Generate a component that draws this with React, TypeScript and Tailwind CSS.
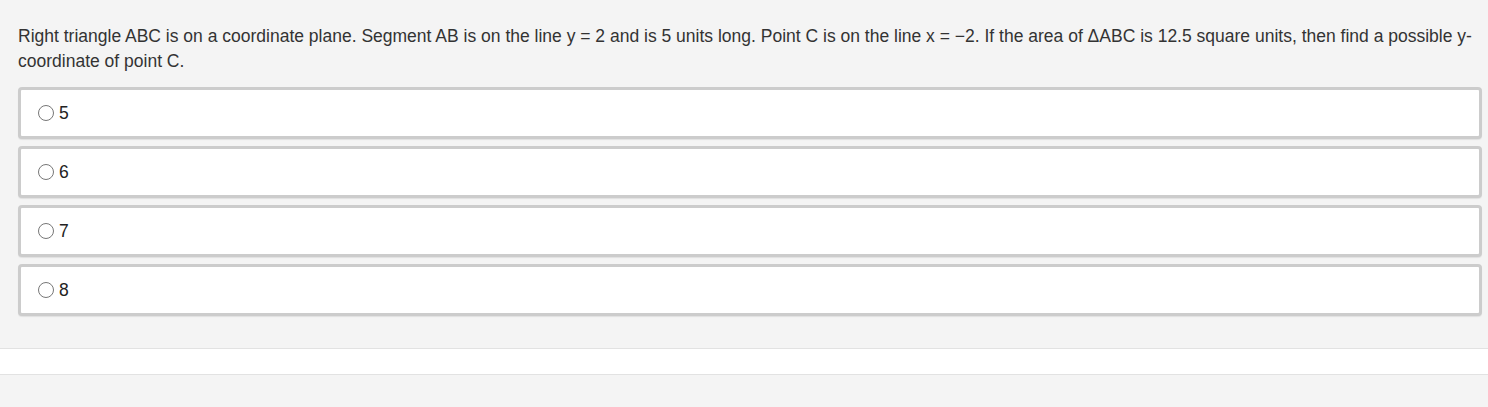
const options = ["5", "6", "7", "8"];

export default function App() {
  return (
    <div className="min-h-[407px] bg-[#f4f4f4] font-['Liberation_Sans',Arial,sans-serif] text-[#333333]">
      <div className="px-[18px] pr-[6px] pt-[24px]">
        <p className="text-[17.5px] leading-[25px] pr-[4px]">
          Right triangle ABC is on a coordinate plane. Segment AB is on the line y = 2 and is 5 units long. Point C is on the line x = −2. If the area of ΔABC is 12.5 square units, then find a possible y-coordinate of point C.
        </p>
        <div className="mt-[13px] flex flex-col gap-[7px]">
          {options.map((opt) => (
            <label
              key={opt}
              className="flex h-[52px] items-center rounded-[4px] border-[3px] border-[#cccccc] bg-white pl-[17px] shadow-[0_1px_1px_rgba(0,0,0,0.08)]"
            >
              <span className="h-[16px] w-[16px] rounded-full border border-[#777777] bg-white" />
              <span className="ml-[5px] pt-[2px] text-[17.5px] leading-none text-[#222222]">{opt}</span>
            </label>
          ))}
        </div>
      </div>
      <div className="mt-[32px] h-[27px] border-y border-[#e2e2e2] bg-white" />
    </div>
  );
}
